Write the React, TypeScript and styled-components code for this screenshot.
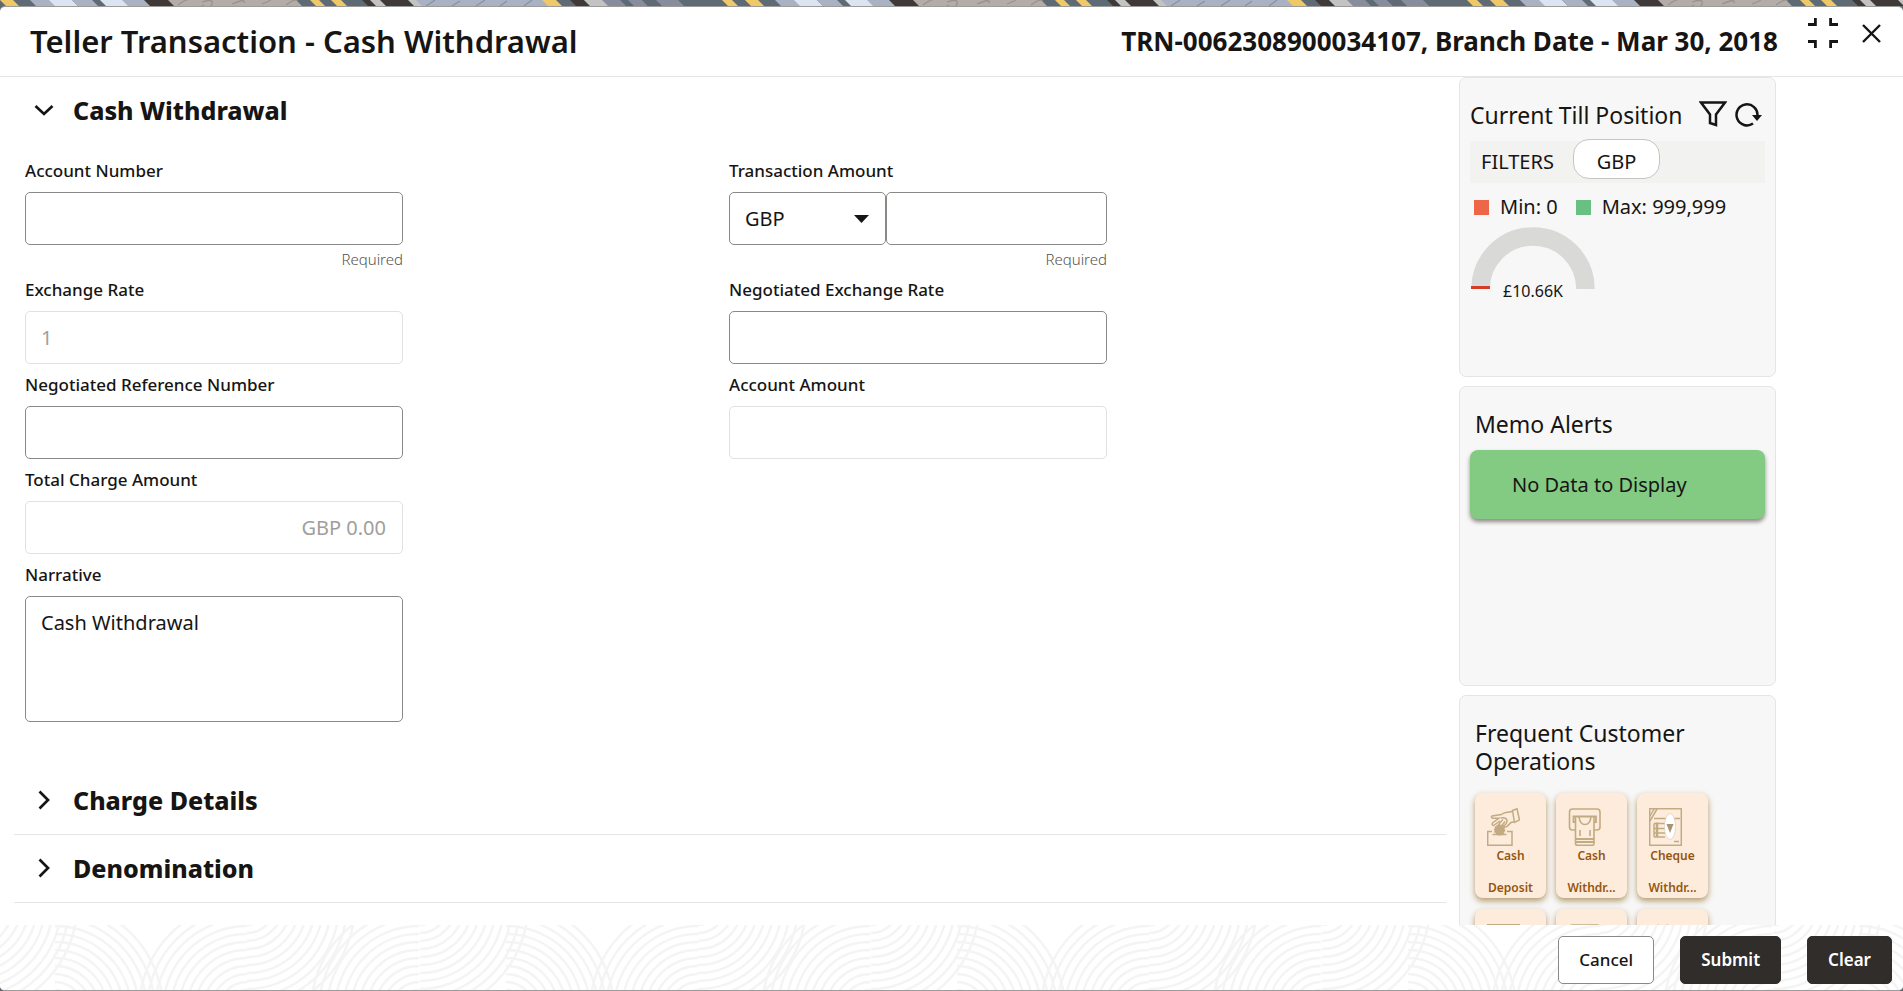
import React from 'react';
import styled, { createGlobalStyle } from 'styled-components';

const ink = '#161513';
const line = '#e5e5e4';

const GlobalStyle = createGlobalStyle`
  *, *::before, *::after { box-sizing: border-box; }
  body {
    margin: 0;
    background: #5c676f;
    color: ${ink};
    font-family: 'Noto Sans', 'Open Sans', sans-serif;
    font-size: 20px;
  }
  button, input, select, textarea { font: inherit; color: inherit; }
  button { cursor: pointer; }
  svg { display: block; flex: none; }
`;

const Page = styled.div`
  display: flex;
  flex-direction: column;
  height: 100vh;
`;

const Strip = styled.svg`
  width: 100%;
  height: 6px;
`;

const Dialog = styled.main`
  flex: 1;
  min-height: 0;
  display: flex;
  flex-direction: column;
  background: #fff;
  border: solid #9b9b9a;
  border-width: 1px 0;
  border-radius: 5px;
  overflow: hidden;
`;

const Header = styled.header`
  display: flex;
  align-items: center;
  height: 70px;
  flex: none;
  padding: 0 22px 2px 30px;
  border-bottom: 1px solid ${line};
`;

const Title = styled.h1`
  margin: 0;
  flex: 1;
  font-size: 31px;
  line-height: 42px;
  font-weight: 600;
`;

const Reference = styled.p`
  margin: 0 30px 0 0;
  font-size: 26px;
  line-height: 36px;
  font-weight: 700;
`;

const WindowActions = styled.div`
  display: flex;
  align-items: center;
  align-self: flex-start;
  gap: 24px;
  height: 30px;
  margin-top: 11px;
`;

const IconButton = styled.button`
  padding: 0;
  border: 0;
  background: none;
`;

const Body = styled.div`
  flex: 1;
  min-height: 0;
  display: flex;
  gap: 13px;
  padding: 0 127px 0 14px;
  overflow: hidden;
`;

const Form = styled.form`
  flex: 1;
  min-width: 0;
`;

const Section = styled.section<{ $divided?: boolean }>`
  border-bottom: ${p => (p.$divided ? `1px solid ${line}` : '0')};
`;

const SectionHeading = styled.h2`
  margin: 0;
  font-size: 25px;
  line-height: 34px;
  font-weight: 800;
`;

const SectionToggle = styled.button`
  display: flex;
  align-items: center;
  gap: 17px;
  width: 100%;
  height: 67px;
  padding: 0 0 2px 18px;
  border: 0;
  background: none;
  text-align: left;
`;

const Fields = styled.div`
  display: grid;
  grid-template-columns: 1fr 1fr;
  row-gap: 9px;
  padding: 15px 13px 45px 11px;
`;

const Field = styled.div<{ $alone?: boolean }>`
  display: flex;
  flex-direction: column;
  grid-column: ${p => (p.$alone ? '1 / -1' : 'auto')};
  width: 378px;
  max-width: 96%;
`;

const Label = styled.label`
  margin-bottom: 9px;
  font-size: 17px;
  line-height: 24px;
  font-weight: 500;
`;

const Input = styled.input<{ $end?: boolean }>`
  width: 100%;
  min-width: 0;
  height: 53px;
  padding: 0 16px 0 15px;
  border: 1px solid #8b8986;
  border-radius: 5px;
  background: #fff;
  text-align: ${p => (p.$end ? 'right' : 'left')};

  &:disabled {
    border-color: #e2e1e0;
    color: #a09e9b;
  }
`;

const TextArea = styled.textarea`
  height: 126px;
  padding: 12px 15px;
  border: 1px solid #8b8986;
  border-radius: 5px;
  line-height: 28px;
  resize: none;
`;

const Hint = styled.small`
  margin-top: 4px;
  align-self: flex-end;
  font-size: 15px;
  line-height: 20px;
  font-weight: 300;
  color: #55524f;
`;

const AmountRow = styled.div`
  display: flex;
`;

const SelectBox = styled.div`
  display: grid;
  flex: none;
  width: 157px;
  align-items: center;

  & > * { grid-area: 1 / 1; }
  & > svg { justify-self: end; margin-right: 17px; pointer-events: none; }
`;

const Select = styled.select`
  appearance: none;
  height: 53px;
  padding: 0 15px;
  border: 1px solid #8b8986;
  border-radius: 5px;
  background: #fff;
`;

const Side = styled.aside`
  display: flex;
  flex-direction: column;
  gap: 9px;
  width: 317px;
  flex: none;
`;

const Card = styled.section`
  min-height: 300px;
  flex: none;
  padding: 23px 10px;
  border: 1px solid ${line};
  border-radius: 7px;
  background: #f7f7f7;
`;

const CardTitle = styled.h2<{ $inset?: boolean }>`
  margin: 0;
  flex: 1;
  padding-left: ${p => (p.$inset ? '5px' : '0')};
  font-size: 23px;
  line-height: 28px;
  font-weight: 400;
`;

const CardHead = styled.div`
  display: flex;
  gap: 8px;
  align-items: flex-start;
  padding-right: 3px;
`;

const FilterBar = styled.div`
  display: flex;
  align-items: flex-start;
  height: 42px;
  margin-top: 12px;
  padding-left: 11px;
  background: #f2f2f1;
`;

const FilterLabel = styled.span`
  width: 92px;
  line-height: 42px;
`;

const Pill = styled.button`
  width: 87px;
  height: 40px;
  margin-top: -2px;
  padding: 5px 0 0;
  border: 1px solid #c6c5c4;
  border-radius: 16px;
  background: #fff;
  line-height: 28px;
`;

const Legend = styled.div`
  display: flex;
  gap: 18px;
  margin-top: 10px;
  padding-left: 4px;
  white-space: nowrap;
`;

const LegendItem = styled.span<{ $color: string }>`
  display: flex;
  align-items: center;
  gap: 11px;
  line-height: 28px;

  &::before {
    content: '';
    width: 15px;
    height: 15px;
    background: ${p => p.$color};
  }
`;

const Gauge = styled.svg`
  margin-top: 6px;
`;

const Notice = styled.p`
  margin: 12px 0 0;
  padding: 21px 42px 20px;
  border-radius: 8px;
  background: #83cb83;
  box-shadow: 0 3px 4px #8f8886;
  line-height: 28px;
`;

const Tiles = styled.div`
  display: grid;
  grid-template-columns: repeat(3, 71px);
  gap: 11px 10px;
  padding: 18px 0 0 5px;
`;

const Tile = styled.button`
  display: flex;
  flex-direction: column;
  gap: 1px;
  height: 105px;
  padding: 15px 4px 0;
  border: 0;
  border-radius: 8px;
  background: #fdecdc;
  box-shadow: 0 3px 6px #b49a6e;
  color: #95560f;
  font-size: 12px;
  line-height: 18px;
  font-weight: 600;

  & > svg { margin-left: 8px; }
`;

const TileText = styled.span`
  display: flex;
  flex-direction: column;
  gap: 14px;
  width: 100%;
  text-align: center;

  & > span {
    overflow: hidden;
    text-overflow: ellipsis;
    white-space: nowrap;
  }
`;

const Footer = styled.footer`
  display: grid;
  flex: none;
  height: 65px;
  background: #fff;

  & > * { grid-area: 1 / 1; }
`;

const FooterActions = styled.div`
  display: flex;
  align-items: center;
  justify-content: flex-end;
  gap: 26px;
  padding: 4px 11px 0 0;
`;

const Button = styled.button<{ $primary?: boolean }>`
  height: 48px;
  padding: 0 20px;
  border: 1px solid ${p => (p.$primary ? '#312d2a' : '#8b8986')};
  border-radius: 5px;
  background: ${p => (p.$primary ? '#312d2a' : '#fff')};
  color: ${p => (p.$primary ? '#fff' : ink)};
  font-size: 17px;
  font-weight: ${p => (p.$primary ? 600 : 500)};
`;

const FILL = {
  slate: '#5f6b74',
  blue: '#a9b2c3',
  pale: '#dbe5f2',
  yellow: '#efc868',
  dark: '#3f3a37',
  taupe: '#b4ada7',
  mist: '#c4c3c4',
  plum: '#888d9d',
};

const BANDS: [number, number, keyof typeof FILL][] = [
  [0, 15, 'yellow'], [13, 32, 'slate'], [30, 52, 'blue'], [49, 72, 'pale'], [72, 93, 'blue'],
  [92, 104, 'slate'], [100, 126, 'pale'], [122, 146, 'blue'], [144, 169, 'dark'], [168, 300, 'taupe'],
  [296, 312, 'slate'], [310, 321, 'yellow'], [319, 333, 'slate'], [331, 344, 'yellow'], [341, 364, 'slate'],
  [362, 372, 'dark'], [370, 384, 'mist'], [380, 410, 'dark'], [408, 424, 'mist'], [416, 546, 'blue'],
  [542, 560, 'yellow'], [556, 571, 'slate'], [570, 584, 'dark'], [584, 604, 'mist'], [602, 622, 'plum'],
  [620, 628, 'slate'], [628, 642, 'plum'], [642, 660, 'slate'], [656, 680, 'plum'], [678, 724, 'slate'],
  [722, 734, 'yellow'], [732, 746, 'slate'],
];

function Artwork() {
  return (
    <Strip aria-hidden="true">
      <defs>
        <pattern id="bands" width="745" height="6" patternUnits="userSpaceOnUse">
          <rect width="745" height="6" fill={FILL.slate} />
          {BANDS.map(([a, b, c]) => (
            <polygon key={a} points={`${a},0 ${b},0 ${b + 6},6 ${a + 6},6`} fill={FILL[c]} />
          ))}
          <g fill="none" stroke="#98928d" strokeWidth="1.3">
            <path d="M178 5q8-6 10-5M202 2q12-4 10 2t-10 1M232 4q14-6 12-1M262 4q10-4 8-4M286 5q8-6 12-5" />
          </g>
          <g fill="none" stroke="#8790a4" strokeWidth="1.2">
            <path d="M426 6l9-6M452 6l8-5M476 6l9-6M500 6l7-5M524 6l8-6" />
          </g>
        </pattern>
      </defs>
      <rect width="100%" height="6" fill="url(#bands)" />
    </Strip>
  );
}

const RADII = [12, 20, 28, 36, 44, 52, 60, 68, 76, 84, 92, 100, 108];

/* Quarter circles: hills rise from below the bar, bowls hang from above it. */
function Arcs({ cx, kind, side }: { cx: number; kind: 'hill' | 'bowl'; side: 1 | -1 }) {
  const cy = kind === 'hill' ? 85 : -20;
  const dir = kind === 'hill' ? -1 : 1;
  const sweep = dir * side < 0 ? 1 : 0;
  return (
    <>
      {RADII.map(r => (
        <path key={r} d={`M${cx} ${cy + dir * r}A${r} ${r} 0 0 ${sweep} ${cx + side * r} ${cy}`} />
      ))}
    </>
  );
}

function FooterPattern() {
  return (
    <svg width="100%" height="65" aria-hidden="true">
      <defs>
        <pattern id="ripples" width="451" height="65" patternUnits="userSpaceOnUse">
          <g fill="none" stroke="#f4f4f4" strokeWidth="2.5">
            <Arcs cx={-31} kind="bowl" side={1} />
            <Arcs cx={55} kind="hill" side={1} />
            <Arcs cx={247} kind="hill" side={-1} />
            <Arcs cx={247} kind="bowl" side={1} />
            <Arcs cx={419} kind="hill" side={-1} />
            <Arcs cx={420} kind="bowl" side={1} />
          </g>
        </pattern>
      </defs>
      <rect width="100%" height="65" fill="url(#ripples)" />
    </svg>
  );
}

const Chevron = ({ open }: { open?: boolean }) => (
  <svg width="24" height="24" viewBox="0 0 24 24" fill="none" stroke={ink} strokeWidth="2.7">
    <path d={open ? 'M3.5 8L12 16L20.5 8' : 'M7.5 3.5L16 12L7.5 20.5'} />
  </svg>
);

const CashDepositIcon = () => (
  <svg width="33" height="38" viewBox="0 0 33 38" fill="none" stroke="#c2aa82" strokeWidth="1.5">
    <path d="M5 23.5H.7V37.3H25V23.5H20M5.5 26.5H19.5" />
    <circle cx="12.5" cy="22" r="5" fill="#c2aa82" strokeDasharray="1.5 1" />
    <path d="M25.5 2.5L30 .8L32.5 12L27.5 14.5Z" />
    <path d="M25.5 3.5L19 4.5Q17 4.8 14.5 6.5L5 8Q3.5 9 5.5 10.3L12 10.3L6 14.5Q4 17 6.5 17.5L13 13M14 10Q19 9 20 12.5Q20 16 16 18.5M16 11.5Q12 15 11 18.5Q12.5 20 15 17.5L18 13.5M27 14Q24 13.5 22.5 16Q20.5 19 17 19.5" />
  </svg>
);

const CashWithdrawalIcon = () => (
  <svg width="33" height="38" viewBox="0 0 33 38" fill="none" stroke="#c2aa82" strokeWidth="1.6">
    <path d="M7.5 22H4.500Q1.500 22 1.500 19V4Q1.500 1 4.500 1H29Q32 1 32 4V19Q32 22 29 22H26" />
    <path d="M7.5 14H5.5V8.5H28V14H26" strokeWidth="1.8" />
    <path d="M7.5 9V35.5Q7.5 37.3 9.5 37.3H24Q26 37.3 26 35.5V9M11 9Q12 16.5 17 16.5Q22 16.5 23 9M12 22V28M22 22V28" />
    <path d="M8 31H26M8 34H26" strokeWidth="2" />
  </svg>
);

const ChequeIcon = () => (
  <svg width="33" height="38" viewBox="0 0 33 38" fill="none" stroke="#c2aa82" strokeWidth="1.5">
    <rect x=".7" y=".7" width="31.6" height="36.6" />
    <path d="M1 8L5 1M1 13L8 1M5 10.5H31M5 15.5H16M5 20.5H16M5 25H16M5 29H16M5 15.5V29M25 33.5H30" />
    <path d="M8 14.5V29" strokeWidth="2.5" />
    <ellipse cx="21" cy="18.5" rx="5.5" ry="13" fill="#fff" stroke="#ddd3c4" strokeWidth=".8" />
    <path d="M17.5 16H24.5L21 25Z" fill="#a8946f" stroke="none" />
  </svg>
);

const TransferIcon = () => (
  <svg width="33" height="38" viewBox="0 0 33 38" fill="none" stroke="#c2aa82" strokeWidth="1.3">
    <path d="M7 10V3L10 .8M16 10V2.5L19 .8M22 10V3" />
    <rect x="2" y="10" width="28" height="26" />
  </svg>
);

interface TileInfo {
  icon: React.ReactNode;
  name: string;
  words?: string[];
}

const OPERATIONS: TileInfo[] = [
  { icon: <CashDepositIcon />, name: 'Cash Deposit', words: ['Cash', 'Deposit'] },
  { icon: <CashWithdrawalIcon />, name: 'Cash Withdrawal', words: ['Cash', 'Withdr...'] },
  { icon: <ChequeIcon />, name: 'Cheque Withdrawal', words: ['Cheque', 'Withdr...'] },
  { icon: <ChequeIcon />, name: 'Cheque Deposit' },
  { icon: <CashWithdrawalIcon />, name: 'Cash Exchange' },
  { icon: <TransferIcon />, name: 'Transfer' },
];

export default function App() {
  return (
    <Page>
      <GlobalStyle />
      <Artwork />
      <Dialog>
        <Header>
          <Title>Teller Transaction - Cash Withdrawal</Title>
          <Reference>TRN-0062308900034107, Branch Date - Mar 30, 2018</Reference>
          <WindowActions>
            <IconButton type="button" aria-label="Collapse">
              <svg width="30" height="30" viewBox="0 0 30 30" fill="none" stroke={ink} strokeWidth="2.8">
                <path d="M0 6.500H7.400V0M22.600 0V6.500H30M0 23.500H7.400V30M30 23.500H22.600V30" />
              </svg>
            </IconButton>
            <IconButton type="button" aria-label="Close">
              <svg width="19" height="19" viewBox="0 0 19 19" fill="none" stroke={ink} strokeWidth="2.4">
                <path d="M1 1L18 18M18 1L1 18" />
              </svg>
            </IconButton>
          </WindowActions>
        </Header>

        <Body>
          <Form>
            <Section>
              <SectionHeading>
                <SectionToggle type="button" aria-expanded="true"><Chevron open />Cash Withdrawal</SectionToggle>
              </SectionHeading>
              <Fields>
                <Field>
                  <Label htmlFor="account">Account Number</Label>
                  <Input id="account" required />
                  <Hint>Required</Hint>
                </Field>
                <Field>
                  <Label htmlFor="amount">Transaction Amount</Label>
                  <AmountRow>
                    <SelectBox>
                      <Select aria-label="Currency" defaultValue="GBP"><option>GBP</option></Select>
                      <svg width="15" height="8" viewBox="0 0 15 8"><path d="M0 0H15L7.5 8Z" fill={ink} /></svg>
                    </SelectBox>
                    <Input id="amount" required />
                  </AmountRow>
                  <Hint>Required</Hint>
                </Field>
                <Field>
                  <Label htmlFor="rate">Exchange Rate</Label>
                  <Input id="rate" defaultValue="1" disabled />
                </Field>
                <Field>
                  <Label htmlFor="negotiated-rate">Negotiated Exchange Rate</Label>
                  <Input id="negotiated-rate" />
                </Field>
                <Field>
                  <Label htmlFor="negotiated-ref">Negotiated Reference Number</Label>
                  <Input id="negotiated-ref" />
                </Field>
                <Field>
                  <Label htmlFor="account-amount">Account Amount</Label>
                  <Input id="account-amount" disabled />
                </Field>
                <Field $alone>
                  <Label htmlFor="charge">Total Charge Amount</Label>
                  <Input id="charge" defaultValue="GBP 0.00" $end disabled />
                </Field>
                <Field $alone>
                  <Label htmlFor="narrative">Narrative</Label>
                  <TextArea id="narrative" defaultValue="Cash Withdrawal" />
                </Field>
              </Fields>
            </Section>
            <Section $divided>
              <SectionHeading>
                <SectionToggle type="button" aria-expanded="false"><Chevron />Charge Details</SectionToggle>
              </SectionHeading>
            </Section>
            <Section $divided>
              <SectionHeading>
                <SectionToggle type="button" aria-expanded="false"><Chevron />Denomination</SectionToggle>
              </SectionHeading>
            </Section>
          </Form>

          <Side>
            <Card>
              <CardHead>
                <CardTitle>Current Till Position</CardTitle>
                <IconButton type="button" aria-label="Filter">
                  <svg width="28" height="26" viewBox="0 0 28 26" fill="none" stroke={ink} strokeWidth="2.5">
                    <path d="M2 1.500H26L17 13.500V24L11 22V13.500Z" />
                  </svg>
                </IconButton>
                <IconButton type="button" aria-label="Refresh">
                  <svg width="27" height="26" viewBox="0 0 27 26" fill="none" stroke={ink} strokeWidth="2.5">
                    <path d="M18 22.500A10.500 10.500 0 1 1 22.500 14.500" />
                    <path d="M17 14H27L22 20Z" fill={ink} stroke="none" />
                  </svg>
                </IconButton>
              </CardHead>
              <FilterBar>
                <FilterLabel>FILTERS</FilterLabel>
                <Pill type="button">GBP</Pill>
              </FilterBar>
              <Legend>
                <LegendItem $color="#ed6647">Min: 0</LegendItem>
                <LegendItem $color="#68c182">Max: 999,999</LegendItem>
              </Legend>
              <Gauge width="126" height="76" viewBox="0 0 126 76" role="img" aria-label="Till position">
                <path d="M10.5 62A52.5 52.5 0 0 1 115.5 62" fill="none" stroke="#d9d9d8" strokeWidth="18.5" />
                <path d="M1 59H20V62H1Z" fill="#d63b25" />
                <text x="63" y="70" fontSize="16" textAnchor="middle" fill={ink}>£10.66K</text>
              </Gauge>
            </Card>
            <Card>
              <CardTitle $inset>Memo Alerts</CardTitle>
              <Notice>No Data to Display</Notice>
            </Card>
            <Card>
              <CardTitle $inset>Frequent Customer Operations</CardTitle>
              <Tiles>
                {OPERATIONS.map(({ icon, name, words }) => (
                  <Tile key={name} type="button" aria-label={name}>
                    {icon}
                    {words && <TileText>{words.map(w => <span key={w}>{w}</span>)}</TileText>}
                  </Tile>
                ))}
              </Tiles>
            </Card>
          </Side>
        </Body>

        <Footer>
          <FooterPattern />
          <FooterActions>
            <Button type="button">Cancel</Button>
            <Button type="button" $primary>Submit</Button>
            <Button type="button" $primary>Clear</Button>
          </FooterActions>
        </Footer>
      </Dialog>
    </Page>
  );
}
